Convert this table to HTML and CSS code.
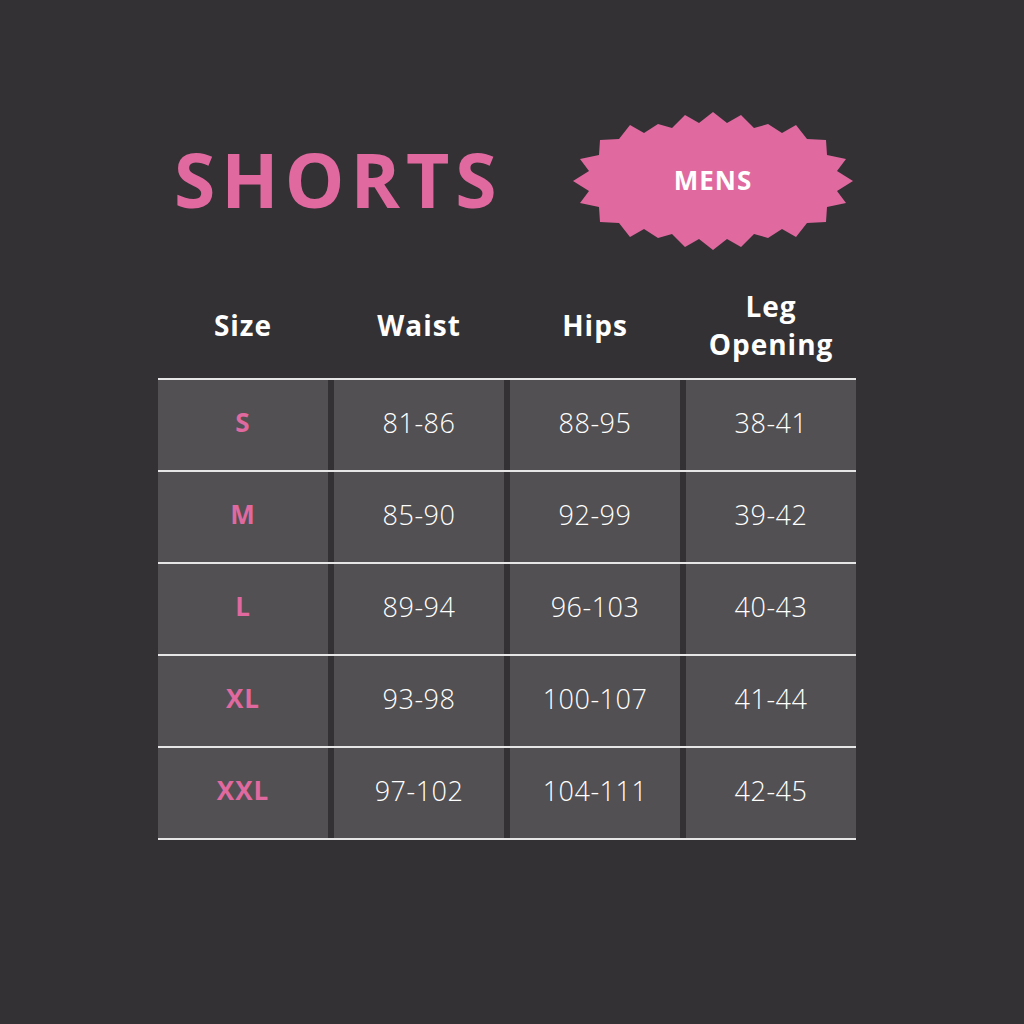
FILE: index.html
```html
<!DOCTYPE html>
<html lang="en">
<head>
<meta charset="utf-8">
<title>Shorts size chart</title>
<link rel="stylesheet" href="styles.css">
</head>
<body>
<main class="chart">
  <header class="top">
    <h1 class="title">SHORTS</h1>
    <div class="badge">
      <svg class="badge-shape" viewBox="-141 -70 282 140" width="282" height="140" aria-hidden="true">
        <polygon fill="#e069a0" points="-140,0 -124,-10 -133,-22 -114,-26 -113,-41 -94,-42 -83,-56 -69,-48 -55,-57 -41,-53 -28,-66 -14,-58 0,-69 14,-58 28,-66 41,-53 55,-57 69,-48 83,-56 94,-42 113,-41 114,-26 133,-22 124,-10 140,0 124,10 133,22 114,26 113,41 94,42 83,56 69,48 55,57 41,53 28,66 14,58 0,69 -14,58 -28,66 -41,53 -55,57 -69,48 -83,56 -94,42 -113,41 -114,26 -133,22 -124,10"/>
      </svg>
      <span class="badge-text">MENS</span>
    </div>
  </header>

  <div class="head-row">
    <div class="th">Size</div>
    <div class="th">Waist</div>
    <div class="th">Hips</div>
    <div class="th">Leg<br>Opening</div>
  </div>

  <div class="table">
    <div class="row"><div class="cell size">S</div><div class="cell">81-86</div><div class="cell">88-95</div><div class="cell">38-41</div></div>
    <div class="row"><div class="cell size">M</div><div class="cell">85-90</div><div class="cell">92-99</div><div class="cell">39-42</div></div>
    <div class="row"><div class="cell size">L</div><div class="cell">89-94</div><div class="cell">96-103</div><div class="cell">40-43</div></div>
    <div class="row"><div class="cell size">XL</div><div class="cell">93-98</div><div class="cell">100-107</div><div class="cell">41-44</div></div>
    <div class="row last"><div class="cell size">XXL</div><div class="cell">97-102</div><div class="cell">104-111</div><div class="cell">42-45</div></div>
  </div>
</main>
</body>
</html>
```

FILE: styles.css
```css
* { box-sizing: border-box; }
html, body {
  margin: 0;
  padding: 0;
  background: #333134;
  width: 1024px;
  height: 1024px;
  overflow: hidden;
  font-family: "Open Sans", "Liberation Sans", sans-serif;
  color: #ffffff;
}
.chart {
  width: 698px;
  margin-left: 158px;
  padding-top: 112px;
}
.top {
  display: flex;
  align-items: center;
  height: 138px;
}
.title {
  margin: 0 0 0 16px;
  padding-bottom: 4px;
  font-size: 75px;
  font-weight: 700;
  letter-spacing: 6px;
  color: #e069a0;
  line-height: 1;
}
.badge {
  position: relative;
  margin-left: auto;
  margin-right: 2px;
  width: 282px;
  height: 140px;
  display: flex;
  align-items: center;
  justify-content: center;
}
.badge-shape {
  position: absolute;
  left: 0;
  top: 0;
}
.badge-text {
  position: relative;
  padding-bottom: 3px;
  font-size: 26px;
  font-weight: 700;
  letter-spacing: 1px;
  color: #ffffff;
}
.head-row {
  display: grid;
  grid-template-columns: repeat(4, 1fr);
  column-gap: 6px;
  margin-top: 37px;
  margin-bottom: 15px;
  height: 76px;
  align-items: center;
}
.th {
  text-align: center;
  font-size: 28px;
  font-weight: 700;
  line-height: 38px;
  letter-spacing: 1px;
  padding-bottom: 2px;
}
.table {
  display: flex;
  flex-direction: column;
}
.row {
  display: grid;
  grid-template-columns: repeat(4, 1fr);
  column-gap: 6px;
  border-top: 2px solid #e6e6e6;
}
.row.last {
  border-bottom: 2px solid #e6e6e6;
}
.cell {
  height: 90px;
  padding-bottom: 6px;
  background: #525052;
  display: flex;
  align-items: center;
  justify-content: center;
  font-size: 27px;
  font-weight: 300;
  letter-spacing: 0.5px;
  color: #ffffff;
}
.cell.size {
  color: #e069a0;
  font-weight: 700;
  font-size: 26px;
  letter-spacing: 1px;
}
```
